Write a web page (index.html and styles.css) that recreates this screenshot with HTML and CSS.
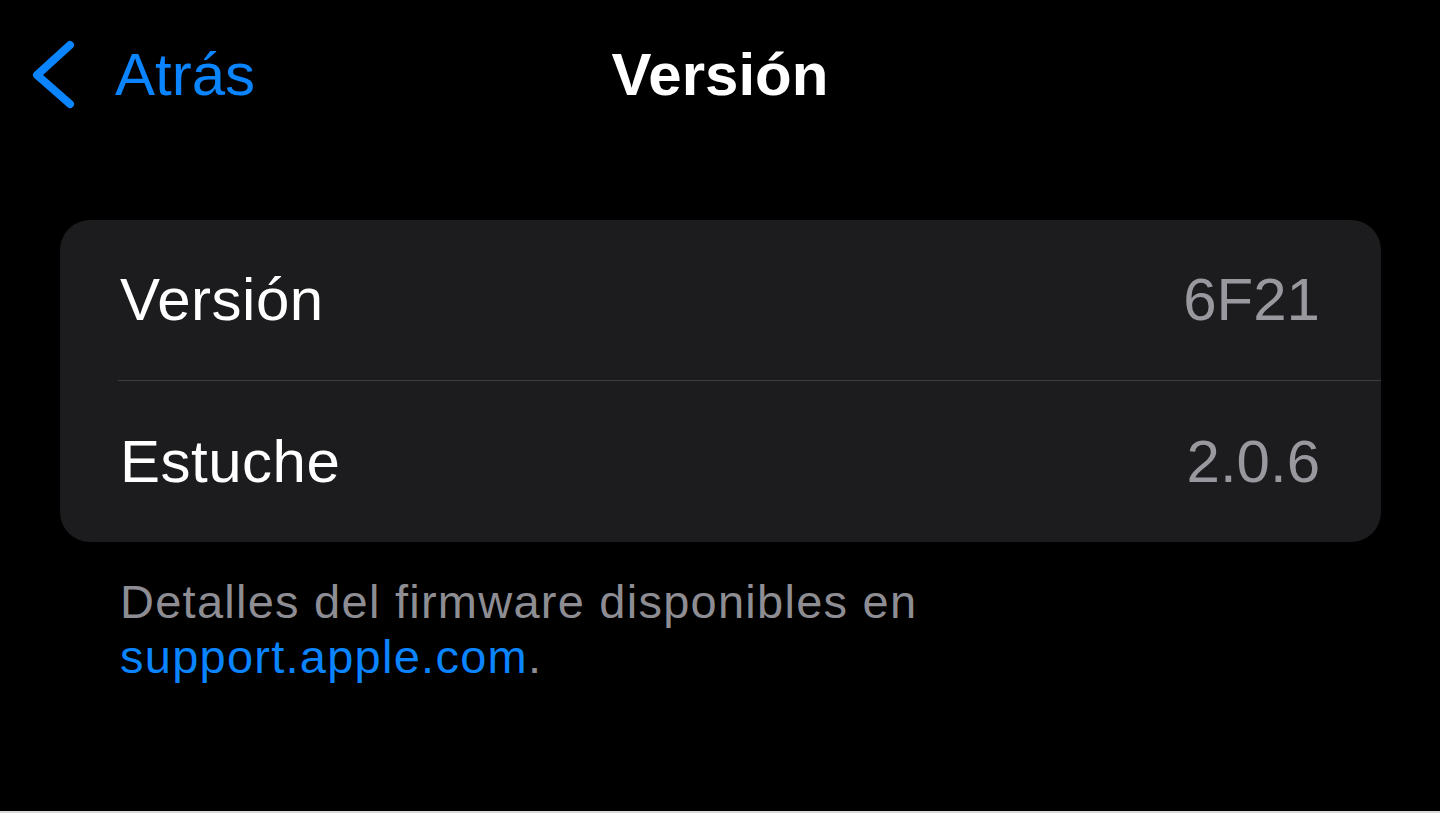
FILE: index.html
```html
<!DOCTYPE html>
<html lang="es">
<head>
  <meta charset="UTF-8" />
  <meta name="viewport" content="width=device-width, initial-scale=1.0" />
  <title>Versión</title>
  <link rel="stylesheet" href="styles.css">
</head>
<body>
  <div class="screen">
    <!-- Barra de navegación -->
    <header class="nav">
      <a class="back" href="#">
        <svg class="chevron" width="46" height="70" viewBox="0 0 46 70">
          <path d="M40 5 L7 35 L40 64" fill="none" stroke="#0a84ff" stroke-width="8" stroke-linecap="round" stroke-linejoin="round" />
        </svg>
        <span>Atrás</span>
      </a>
      <h1 class="nav-title">Versión</h1>
      <div></div>
    </header>

    <!-- Grupo de información -->
    <section class="card">
      <div class="row">
        <span class="label">Versión</span>
        <span class="value">6F21</span>
      </div>
      <div class="divider"></div>
      <div class="row">
        <span class="label">Estuche</span>
        <span class="value">2.0.6</span>
      </div>
    </section>

    <p class="note">
      Detalles del firmware disponibles en<br>
      <a href="#">support.apple.com</a>.
    </p>
  </div>
  <div class="edge"></div>
</body>
</html>
```

FILE: styles.css
```css
* {
  box-sizing: border-box;
  margin: 0;
  padding: 0;
}

html, body {
  background: #000;
  font-family: "Liberation Sans", Arial, sans-serif;
  color: #fff;
  overflow: hidden;
}

.screen {
  height: 811px;
}

.edge {
  height: 2px;
  background: #d9d9d9;
}

.nav {
  display: grid;
  grid-template-columns: 1fr auto 1fr;
  align-items: center;
  padding-top: 40px;
  line-height: 60px;
  font-size: 60px;
}

.back {
  display: flex;
  align-items: center;
  gap: 39px;
  padding-left: 30px;
  color: #0a84ff;
  text-decoration: none;
}

.chevron {
  display: block;
}

.nav-title {
  font-size: 60px;
  font-weight: bold;
  letter-spacing: 0;
}

.card {
  margin: 110px 59px 0 60px;
  background: #1c1c1e;
  border-radius: 30px;
  overflow: hidden;
}

.row {
  display: flex;
  justify-content: space-between;
  align-items: center;
  height: 160px;
  padding: 0 61px 0 60px;
  font-size: 60px;
  line-height: 60px;
}

.row:last-child {
  height: 161px;
}

.label {
  letter-spacing: 0.5px;
}

.value {
  color: #98989e;
}

.divider {
  height: 1px;
  margin-left: 58px;
  background: #3d3d41;
}

.note {
  margin: 32px 0 0 120px;
  font-size: 47px;
  line-height: 55px;
  letter-spacing: 1.25px;
  color: #8d8d93;
}

.note a {
  color: #0a84ff;
  text-decoration: none;
}
```
